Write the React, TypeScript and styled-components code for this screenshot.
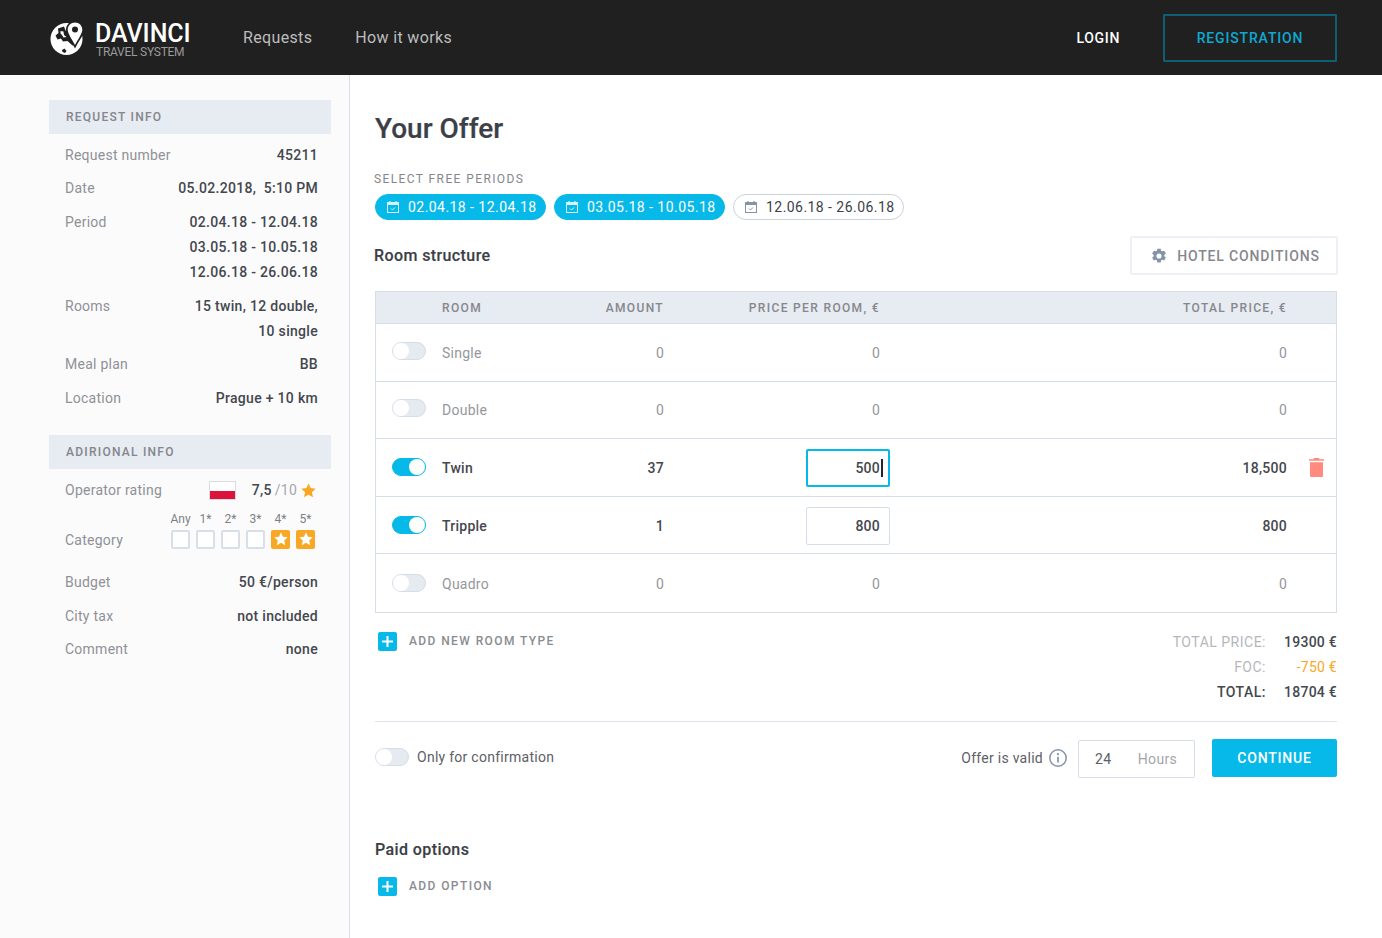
import { createGlobalStyle, styled } from "styled-components";

const GlobalStyle = createGlobalStyle`
  html, body {
    margin: 0;
    padding: 0;
    background: #fff;
  }
  body {
    font-family: Roboto, "Liberation Sans", sans-serif;
    color: #3c3f47;
    -webkit-font-smoothing: antialiased;
  }
  * {
    box-sizing: border-box;
  }
`;

const Page = styled.div`
  width: 1382px;
  height: 938px;
  overflow: hidden;
  display: flex;
  flex-direction: column;
`;

const Header = styled.header`
  flex: 0 0 75px;
  background: #202020;
  display: flex;
  align-items: center;
  padding: 0 45px 0 50px;
`;

const Logo = styled.div`
  display: flex;
  align-items: center;
  gap: 11px;
  width: 193px;
`;

const LogoText = styled.div`
  display: flex;
  flex-direction: column;
  padding-top: 4px;
`;

const LogoName = styled.span`
  color: #fff;
  font-size: 25px;
  line-height: 24px;
  font-weight: 500;
  letter-spacing: -0.05px;
`;

const LogoSub = styled.span`
  color: #9b9b9b;
  font-size: 12px;
  line-height: 12px;
  margin-left: 1px;
  letter-spacing: -0.25px;
`;

const Nav = styled.nav`
  display: flex;
  gap: 43px;
  flex: 1;
`;

const NavLink = styled.a`
  color: #bdbdbd;
  font-size: 16px;
  letter-spacing: 0.35px;
`;

const Login = styled.a`
  color: #fff;
  font-size: 14px;
  font-weight: 500;
  letter-spacing: 0.65px;
  margin-right: 43px;
`;

const RegisterButton = styled.button`
  width: 174px;
  height: 48px;
  background: transparent;
  border: 2px solid #0f5f74;
  border-radius: 1px;
  color: #0fa8d2;
  font: 500 14px Roboto, sans-serif;
  letter-spacing: 0.85px;
`;

const Body = styled.div`
  flex: 1;
  display: flex;
`;

const Sidebar = styled.aside`
  flex: 0 0 350px;
  background: #fbfbfc;
  border-right: 1px solid #d9dfe9;
  padding: 25px 18px 0 49px;
`;

const SectionHead = styled.div`
  height: 34px;
  line-height: 34px;
  background: #e7ebf2;
  padding-left: 17px;
  color: #83868c;
  font-size: 12px;
  font-weight: 500;
  letter-spacing: 1.25px;
`;

const InfoList = styled.div`
  padding: 8.5px 13px 24.5px 16px;
  display: flex;
  flex-direction: column;
  gap: 8.7px;
`;

const InfoRow = styled.div`
  display: flex;
  justify-content: space-between;
  font-size: 14px;
  line-height: 25px;
  letter-spacing: 0.25px;
`;

const InfoLabel = styled.span`
  color: #8f9196;
`;

const InfoValue = styled.span`
  color: #44474e;
  font-weight: 500;
  text-align: right;
  white-space: pre-wrap;
  letter-spacing: 0.3px;
`;

const RatingRow = styled(InfoRow)`
  align-items: center;
`;

const RatingValue = styled.div`
  display: flex;
  align-items: center;
  margin-right: 2px;
`;

const Flag = styled.span`
  width: 27px;
  height: 19px;
  margin-right: 16px;
  border: 1px solid #d9dce2;
  background: linear-gradient(#fff 0 50%, #dc143c 50% 100%);
`;

const RatingMax = styled.span`
  color: #a5a7ab;
  margin: 0 4px 0 3px;
`;

const CategoryRow = styled.div`
  display: flex;
  justify-content: space-between;
  align-items: flex-end;
  font-size: 14px;
  margin: 1px 0 12.5px;
`;

const CategoryLabel = styled(InfoLabel)`
  line-height: 18px;
  letter-spacing: 0.25px;
`;

const Stars = styled.div`
  display: flex;
  gap: 6px;
  margin-right: 3px;
`;

const StarCol = styled.div`
  width: 19px;
  display: flex;
  flex-direction: column;
  align-items: center;
  gap: 4px;
  font-size: 12px;
  line-height: 13px;
  color: #7d7f85;
  white-space: nowrap;
`;

const StarBox = styled.span<{ $on?: boolean }>`
  width: 19px;
  height: 19px;
  border-radius: 2px;
  display: flex;
  align-items: center;
  justify-content: center;
  background: ${(p) => (p.$on ? "#f9a825" : "#fff")};
  border: 2px solid ${(p) => (p.$on ? "#f9a825" : "#d8dfe9")};
`;

const Main = styled.main`
  flex: 1;
  padding: 35px 45px 0 25px;
`;

const Title = styled.h1`
  margin: 0;
  font-size: 28px;
  line-height: 38px;
  font-weight: 500;
  color: #3c3f47;
  -webkit-text-stroke: 0.2px #3c3f47;
`;

const Caption = styled.div`
  margin: 24px 0 0 -1px;
  font-size: 12px;
  line-height: 14px;
  letter-spacing: 1.4px;
  color: #85878d;
`;

const Chips = styled.div`
  display: flex;
  gap: 8.5px;
  margin-top: 8px;
`;

const Chip = styled.div<{ $on?: boolean }>`
  width: 170.5px;
  height: 26px;
  border-radius: 13px;
  display: flex;
  align-items: center;
  gap: 8px;
  padding-left: 10px;
  font-size: 14px;
  letter-spacing: 0.45px;
  background: ${(p) => (p.$on ? "#07b9e8" : "#fff")};
  color: ${(p) => (p.$on ? "#fff" : "#3c3f47")};
  border: 1px solid ${(p) => (p.$on ? "#07b9e8" : "#c9d2e0")};
`;

const ChipIcon = styled.svg<{ $on?: boolean }>`
  width: 14px;
  height: 14px;
  color: ${(p) => (p.$on ? "#d5f3fb" : "#8593a8")};
`;

const SectionBar = styled.div`
  display: flex;
  justify-content: space-between;
  align-items: center;
  margin: 16px -1px 16px -1px;
`;

const SubTitle = styled.h2`
  margin: 0;
  font-size: 16px;
  line-height: 20px;
  font-weight: 500;
  letter-spacing: 0.4px;
  color: #3c3f47;
  -webkit-text-stroke: 0.15px #3c3f47;
`;

const GhostButton = styled.button`
  width: 208px;
  height: 39px;
  padding-left: 9px;
  display: flex;
  align-items: center;
  justify-content: center;
  gap: 10px;
  background: #fff;
  border: 2px solid #edf0f5;
  border-radius: 2px;
  color: #85878d;
  font: 500 14px Roboto, sans-serif;
  letter-spacing: 0.85px;
`;

const Table = styled.div`
  border: 1px solid #d5dde8;
`;

const Grid = styled.div`
  display: grid;
  grid-template-columns: 66px 130px 92px 226px 397px 49px;
  align-items: center;
`;

const TableHead = styled(Grid)`
  height: 32px;
  background: #e7ebf2;
  border-bottom: 1px solid #d5dde8;
  color: #85878d;
  font-size: 12px;
  font-weight: 500;
  letter-spacing: 1.35px;
`;

const TableRow = styled(Grid)<{ $on?: boolean }>`
  height: 57.6px;
  padding-top: 1px;
  font-size: 14px;
  letter-spacing: 0.25px;
  font-weight: ${(p) => (p.$on ? 500 : 400)};
  color: ${(p) => (p.$on ? "#44474e" : "#95979c")};
  border-bottom: 1px solid #d5dde8;
  &:last-child {
    border-bottom: 0;
  }
`;

const ToggleCell = styled.div<{ $lift?: boolean }>`
  padding-left: 16px;
  display: flex;
  margin-bottom: ${(p) => (p.$lift ? "4px" : "1px")};
`;

const Toggle = styled.span<{ $on?: boolean }>`
  width: 34px;
  height: 18px;
  border-radius: 9px;
  display: flex;
  justify-content: ${(p) => (p.$on ? "flex-end" : "flex-start")};
  background: ${(p) => (p.$on ? "#07b9e8" : "#e6eaf1")};
  border: 1px solid ${(p) => (p.$on ? "#07b9e8" : "#d5dde8")};
`;

const ToggleKnob = styled.span`
  width: 16px;
  height: 16px;
  border-radius: 50%;
  background: #fff;
`;

const NumCell = styled.div`
  text-align: right;
`;

const PriceCell = styled(NumCell)`
  padding-right: 10px;
  display: flex;
  justify-content: flex-end;
`;

const HeadPriceCell = styled(NumCell)`
  padding-right: 10px;
`;

const PriceInput = styled.div<{ $focused?: boolean }>`
  width: 84px;
  height: 38px;
  margin-right: -10px;
  padding-right: ${(p) => (p.$focused ? "8px" : "9px")};
  line-height: ${(p) => (p.$focused ? "34px" : "36px")};
  text-align: right;
  background: #fff;
  border-radius: 2px;
  border: ${(p) => (p.$focused ? "2px solid #07b9e8" : "1px solid #d5dde8")};
`;

const Caret = styled.span`
  display: inline-block;
  width: 2px;
  height: 18px;
  margin-left: 1px;
  margin-right: -3px;
  vertical-align: -4px;
  background: #22252b;
`;

const ActionCell = styled.div`
  display: flex;
  padding-left: 22px;
`;

const UnderTable = styled.div`
  display: flex;
  justify-content: space-between;
  align-items: flex-start;
  padding-top: 19px;
`;

const AddLink = styled.div`
  display: flex;
  align-items: center;
  gap: 12px;
  margin-left: 3px;
  color: #8a8c92;
  font-size: 12px;
  font-weight: 500;
  letter-spacing: 1.4px;
`;

const PlusBox = styled.span`
  width: 19px;
  height: 19px;
  border-radius: 2px;
  background: #07b9e8;
  display: flex;
  align-items: center;
  justify-content: center;
`;

const Totals = styled.div`
  display: grid;
  grid-template-columns: auto 71px;
  font-size: 14px;
  line-height: 25px;
  letter-spacing: 0.25px;
  text-align: right;
  margin-top: -2px;
`;

const TotalLabel = styled.span<{ $strong?: boolean }>`
  color: ${(p) => (p.$strong ? "#44474e" : "#b5b7bb")};
  font-weight: ${(p) => (p.$strong ? 500 : 400)};
  letter-spacing: 0.5px;
`;

const TotalValue = styled.span<{ $accent?: boolean }>`
  color: ${(p) => (p.$accent ? "#f9a825" : "#44474e")};
  font-weight: ${(p) => (p.$accent ? 400 : 500)};
`;

const Divider = styled.hr`
  border: 0;
  border-top: 1px solid #dde2ec;
  margin: 16px 0 17px;
`;

const FooterRow = styled.div`
  display: flex;
  justify-content: space-between;
  align-items: flex-start;
`;

const ConfirmToggle = styled.div`
  display: flex;
  align-items: center;
  gap: 8px;
  padding-top: 9px;
  font-size: 14px;
  letter-spacing: 0.27px;
  color: #5d6067;
`;

const OfferGroup = styled.div`
  display: flex;
  align-items: flex-start;
`;

const OfferLabel = styled.div`
  display: flex;
  align-items: center;
  gap: 6px;
  height: 38px;
  margin-right: 11px;
  font-size: 14px;
  letter-spacing: 0.27px;
  color: #5d6067;
`;

const HoursBox = styled.div`
  width: 117px;
  height: 38px;
  margin-top: 1px;
  margin-right: 17px;
  padding: 0 17px 0 16px;
  display: flex;
  justify-content: space-between;
  align-items: center;
  border: 1px solid #d5dde8;
  border-radius: 2px;
  font-size: 14px;
  letter-spacing: 0.3px;
  color: #5d6067;
`;

const HoursUnit = styled.span`
  color: #a3a5aa;
`;

const ContinueButton = styled.button`
  width: 125px;
  height: 38px;
  border: 0;
  border-radius: 2px;
  background: #07b9e8;
  color: #fff;
  font: 500 14px Roboto, sans-serif;
  letter-spacing: 0.8px;
`;

const PaidOptions = styled.div`
  margin-top: 62px;
  display: flex;
  flex-direction: column;
  gap: 17px;
`;

function Globe() {
  return (
    <svg width="34" height="34" viewBox="0 0 34 34" aria-hidden>
      <circle cx="16.500" cy="18" r="16" fill="#fff" />
      {/* ocean with one island, the land below it stays white */}
      <path d="M8 7.500l6-2 1.500 4 3.500 1.500 8 11-4.500 2.500-5-4.500-4.500.5-2-3-3.500 1-2-4 3-2.500z" fill="#202020" />
      <path d="M10.500 10l3 .5.5 3.500 2.500 2-3 .5-1.500-2.500-1.500-1.500z" fill="#fff" />
      <path d="M12 29l2.500-1.500 2 2.500-1.500 2-2.500-1z" fill="#202020" />
      <path d="M25 0c-5.200 0-9 4-9 8.800C16 14 21.200 20 25 27.500c3.800-7.500 9-13.500 9-18.700C34 4 30.200 0 25 0z" fill="#202020" />
      <path d="M25 1.500c-4.200 0-7.300 3.200-7.300 7.200 0 3.900 4 8.800 7.300 15.300 3.300-6.500 7.300-11.400 7.300-15.300 0-4-3.100-7.200-7.300-7.200z" fill="#fff" />
      <circle cx="25" cy="8.500" r="3" fill="#202020" />
    </svg>
  );
}

function CalendarIcon({ on }: { on?: boolean }) {
  return (
    <ChipIcon $on={on} viewBox="0 0 14 14" fill="none" stroke="currentColor" aria-hidden>
      <rect x="1.500" y="2.500" width="11" height="10" strokeWidth="1" />
      <path d="M1.500 3h11v1.500h-11z" fill="currentColor" strokeWidth="1" />
      <path d="M4 1v2M10 1v2" strokeWidth="1.200" />
      <path d="M5 8.500l1.500 1.500L9 7.500" strokeWidth="1" />
    </ChipIcon>
  );
}

function Star({ size, color }: { size: number; color: string }) {
  return (
    <svg width={size} height={size} viewBox="0 0 24 24" aria-hidden>
      <path
        d="M12 .5l3.400 7.600 8.100.9-6 5.600 1.700 8.200L12 18.600l-7.200 4.200 1.700-8.200-6-5.600 8.100-.9z"
        fill={color}
      />
    </svg>
  );
}

function GearIcon() {
  return (
    <svg width="16" height="16" viewBox="0 0 24 24" aria-hidden>
      <path
        fill="#8593a8"
        fillRule="evenodd"
        d="M14.500 1l.6 3.100c.6.2 1.200.5 1.700.9l3-1 2.500 4.300-2.400 2.100c.1.600.1 1.300 0 1.900l2.400 2.100-2.500 4.300-3-1c-.5.400-1.100.7-1.700.9l-.6 3.100h-5l-.6-3.100c-.6-.2-1.200-.5-1.700-.9l-3 1-2.500-4.300 2.400-2.100c-.1-.6-.1-1.300 0-1.900L1.700 8.300l2.500-4.300 3 1c.5-.4 1.100-.7 1.700-.9L9.500 1zM12 8.200a3.800 3.800 0 1 0 0 7.600 3.800 3.800 0 0 0 0-7.600z"
      />
    </svg>
  );
}

function TrashIcon() {
  return (
    <svg width="15" height="19" viewBox="0 0 15 19" aria-hidden>
      <path fill="#ff8a80" d="M5 0h5l.5 1.200H15v1.600H0V1.200h4.500zM1 4.200h13v13.800a1 1 0 0 1-1 1H2a1 1 0 0 1-1-1z" />
    </svg>
  );
}

function InfoIcon() {
  return (
    <svg width="18" height="18" viewBox="0 0 18 18" fill="none" aria-hidden>
      <circle cx="9" cy="9" r="8.200" stroke="#8593a8" strokeWidth="1.500" />
      <path d="M9 7.800v5.700" stroke="#8593a8" strokeWidth="1.700" />
      <circle cx="9" cy="5.200" r="1.100" fill="#8593a8" />
    </svg>
  );
}

function Plus() {
  return (
    <PlusBox>
      <svg width="11" height="11" viewBox="0 0 11 11" aria-hidden>
        <path d="M5.500 0v11M0 5.500h11" stroke="#fff" strokeWidth="2" />
      </svg>
    </PlusBox>
  );
}

function Switch({ on }: { on?: boolean }) {
  return (
    <Toggle $on={on}>
      <ToggleKnob />
    </Toggle>
  );
}

const requestInfo = [
  ["Request number", "45211"],
  ["Date", "05.02.2018,  5:10 PM"],
  ["Period", "02.04.18 - 12.04.18\n03.05.18 - 10.05.18\n12.06.18 - 26.06.18"],
  ["Rooms", "15 twin, 12 double,\n10 single"],
  ["Meal plan", "BB"],
  ["Location", "Prague + 10 km"],
];

const extraInfo = [
  ["Budget", "50 €/person"],
  ["City tax", "not included"],
  ["Comment", "none"],
];

const categories = ["Any", "1*", "2*", "3*", "4*", "5*"];

const periods = [
  { label: "02.04.18 - 12.04.18", on: true },
  { label: "03.05.18 - 10.05.18", on: true },
  { label: "12.06.18 - 26.06.18", on: false },
];

const rooms = [
  { name: "Single", amount: "0", price: "0", total: "0", lift: true },
  { name: "Double", amount: "0", price: "0", total: "0", lift: true },
  { name: "Twin", amount: "37", price: "500", total: "18,500", on: true, focused: true },
  { name: "Tripple", amount: "1", price: "800", total: "800", on: true },
  { name: "Quadro", amount: "0", price: "0", total: "0" },
];

export default function App() {
  return (
    <Page>
      <GlobalStyle />
      <Header>
        <Logo>
          <Globe />
          <LogoText>
            <LogoName>DAVINCI</LogoName>
            <LogoSub>TRAVEL SYSTEM</LogoSub>
          </LogoText>
        </Logo>
        <Nav>
          <NavLink>Requests</NavLink>
          <NavLink>How it works</NavLink>
        </Nav>
        <Login>LOGIN</Login>
        <RegisterButton>REGISTRATION</RegisterButton>
      </Header>
      <Body>
        <Sidebar>
          <SectionHead>REQUEST INFO</SectionHead>
          <InfoList>
            {requestInfo.map(([label, value]) => (
              <InfoRow key={label}>
                <InfoLabel>{label}</InfoLabel>
                <InfoValue>{value}</InfoValue>
              </InfoRow>
            ))}
          </InfoList>
          <SectionHead>ADIRIONAL INFO</SectionHead>
          <InfoList>
            <RatingRow>
              <InfoLabel>Operator rating</InfoLabel>
              <RatingValue>
                <Flag />
                <InfoValue>7,5</InfoValue>
                <RatingMax>/10</RatingMax>
                <Star size={15} color="#f9a825" />
              </RatingValue>
            </RatingRow>
            <CategoryRow>
              <CategoryLabel>Category</CategoryLabel>
              <Stars>
                {categories.map((c, i) => (
                  <StarCol key={c}>
                    {c}
                    <StarBox $on={i > 3}>{i > 3 && <Star size={14} color="#fff" />}</StarBox>
                  </StarCol>
                ))}
              </Stars>
            </CategoryRow>
            {extraInfo.map(([label, value]) => (
              <InfoRow key={label}>
                <InfoLabel>{label}</InfoLabel>
                <InfoValue>{value}</InfoValue>
              </InfoRow>
            ))}
          </InfoList>
        </Sidebar>
        <Main>
          <Title>Your Offer</Title>
          <Caption>SELECT FREE PERIODS</Caption>
          <Chips>
            {periods.map((p) => (
              <Chip key={p.label} $on={p.on}>
                <CalendarIcon on={p.on} />
                {p.label}
              </Chip>
            ))}
          </Chips>
          <SectionBar>
            <SubTitle>Room structure</SubTitle>
            <GhostButton>
              <GearIcon />
              HOTEL CONDITIONS
            </GhostButton>
          </SectionBar>
          <Table>
            <TableHead>
              <span />
              <span>ROOM</span>
              <NumCell>AMOUNT</NumCell>
              <HeadPriceCell>PRICE PER ROOM, €</HeadPriceCell>
              <NumCell>TOTAL PRICE, €</NumCell>
              <span />
            </TableHead>
            {rooms.map((r) => (
              <TableRow key={r.name} $on={r.on}>
                <ToggleCell $lift={r.lift}>
                  <Switch on={r.on} />
                </ToggleCell>
                <span>{r.name}</span>
                <NumCell>{r.amount}</NumCell>
                <PriceCell>
                  {r.on ? (
                    <PriceInput $focused={r.focused}>
                      {r.price}
                      {r.focused && <Caret />}
                    </PriceInput>
                  ) : (
                    r.price
                  )}
                </PriceCell>
                <NumCell>{r.total}</NumCell>
                <ActionCell>{r.focused && <TrashIcon />}</ActionCell>
              </TableRow>
            ))}
          </Table>
          <UnderTable>
            <AddLink>
              <Plus />
              ADD NEW ROOM TYPE
            </AddLink>
            <Totals>
              <TotalLabel>TOTAL PRICE:</TotalLabel>
              <TotalValue>19300 €</TotalValue>
              <TotalLabel>FOC:</TotalLabel>
              <TotalValue $accent>-750 €</TotalValue>
              <TotalLabel $strong>TOTAL:</TotalLabel>
              <TotalValue>18704 €</TotalValue>
            </Totals>
          </UnderTable>
          <Divider />
          <FooterRow>
            <ConfirmToggle>
              <Switch />
              Only for confirmation
            </ConfirmToggle>
            <OfferGroup>
              <OfferLabel>
                Offer is valid
                <InfoIcon />
              </OfferLabel>
              <HoursBox>
                24
                <HoursUnit>Hours</HoursUnit>
              </HoursBox>
              <ContinueButton>CONTINUE</ContinueButton>
            </OfferGroup>
          </FooterRow>
          <PaidOptions>
            <SubTitle>Paid options</SubTitle>
            <AddLink>
              <Plus />
              ADD OPTION
            </AddLink>
          </PaidOptions>
        </Main>
      </Body>
    </Page>
  );
}
